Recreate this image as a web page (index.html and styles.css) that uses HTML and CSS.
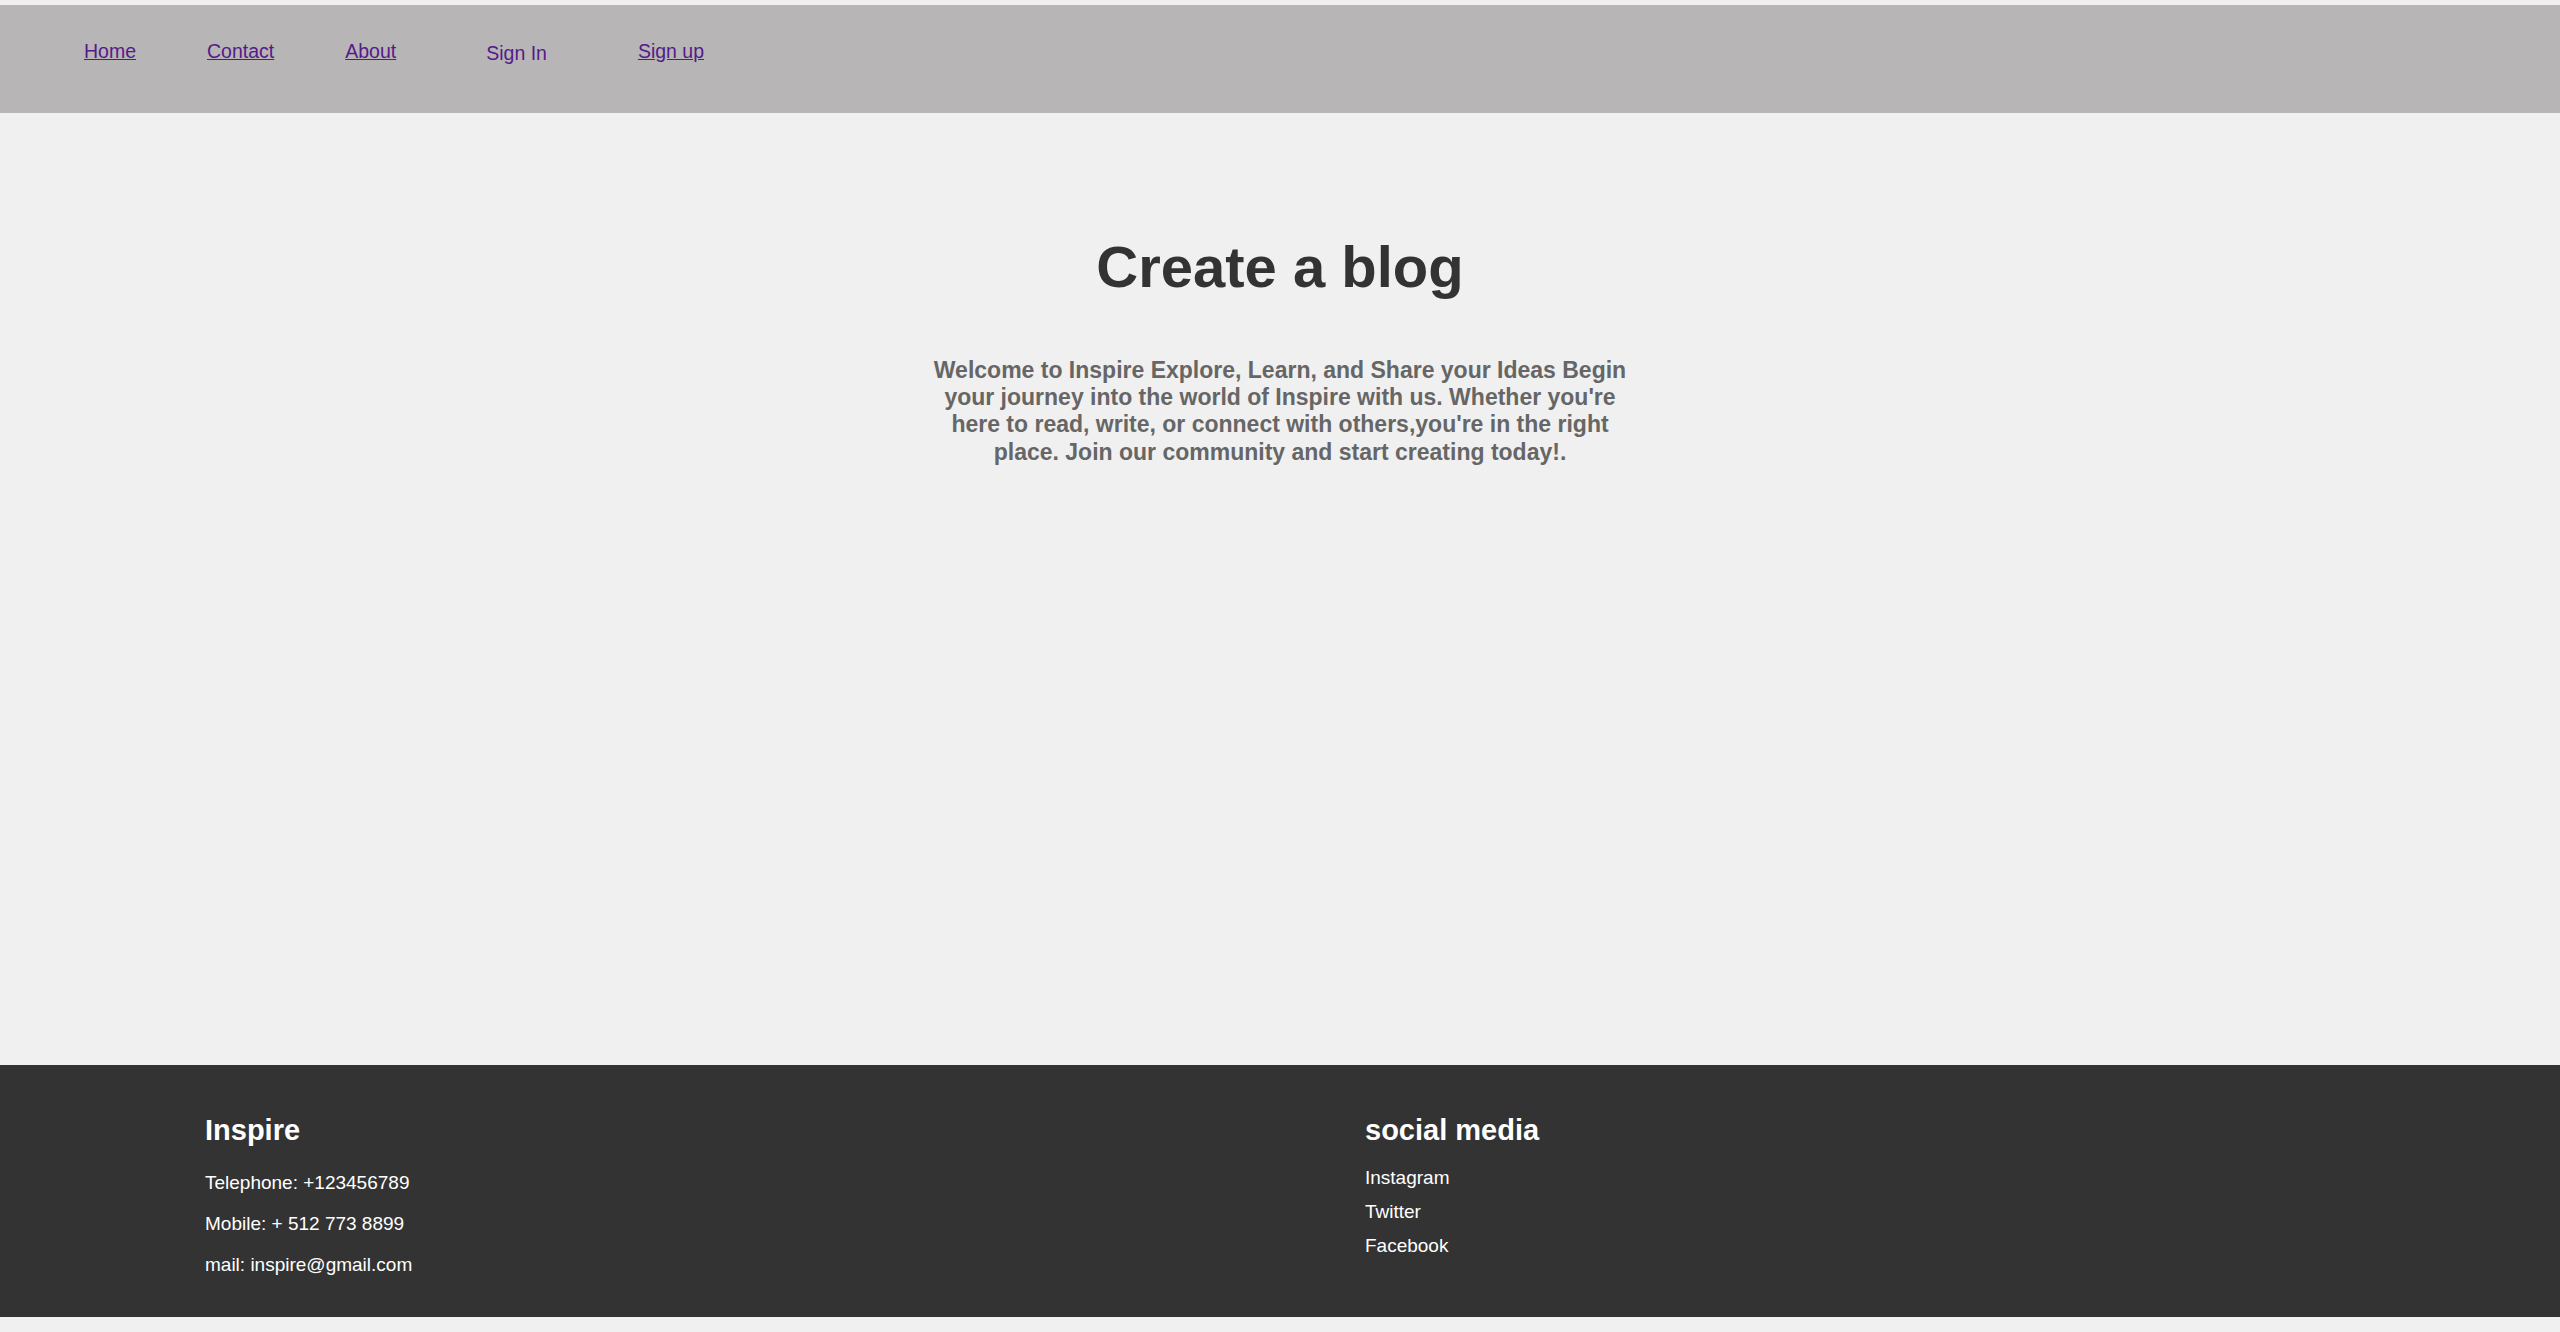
FILE: index.html
```html
<!DOCTYPE html>
<html lang="en">
<head>
<meta charset="utf-8">
<title>Inspire - Create a blog</title>
<link rel="stylesheet" href="styles.css">
</head>
<body>
<header class="topbar">
  <nav class="nav">
    <a class="nav-link" href="#home">Home</a>
    <a class="nav-link" href="#contact">Contact</a>
    <a class="nav-link" href="#about">About</a>
    <span class="nav-link nav-signin">Sign In</span>
    <a class="nav-link nav-signup" href="#signup">Sign up</a>
  </nav>
</header>
<main class="hero">
  <h1 class="hero-title">Create a blog</h1>
  <p class="hero-text">Welcome to Inspire Explore, Learn, and Share your Ideas Begin your journey into the world of Inspire with us. Whether you're here to read, write, or connect with others,you're in the right place. Join our community and start creating today!.</p>
</main>
<footer class="footer">
  <div class="footer-col footer-contact">
    <h2 class="footer-title">Inspire</h2>
    <p class="footer-line">Telephone: +123456789</p>
    <p class="footer-line">Mobile: + 512 773 8899</p>
    <p class="footer-line">mail: inspire@gmail.com</p>
  </div>
  <div class="footer-col footer-social">
    <h2 class="footer-title">social media</h2>
    <ul class="social-list">
      <li class="social-item">Instagram</li>
      <li class="social-item">Twitter</li>
      <li class="social-item">Facebook</li>
    </ul>
  </div>
</footer>
<div class="page-end"></div>
</body>
</html>
```
FILE: styles.css
```css
* { box-sizing: border-box; }

html, body {
  margin: 0;
  padding: 0;
}

body {
  background: #f0f0f0;
  font-family: "Liberation Sans", Arial, sans-serif;
  padding-top: 5px;
}

.topbar {
  background: #b7b5b5;
  height: 108px;
  padding: 35px 0 0 84px;
}

.nav {
  display: flex;
  align-items: flex-start;
}

.nav-link {
  font-size: 19.5px;
  line-height: 23px;
  color: #551a8b;
  text-decoration: underline;
  margin-right: 71px;
}

.nav-link:nth-child(3) { margin-right: 90px; }

.nav-signin {
  text-decoration: none;
  margin-top: 1.5px;
  margin-right: 91px;
}

.nav-signup { margin-right: 0; }

.hero {
  height: 952px;
  padding-top: 120px;
  display: flex;
  flex-direction: column;
  align-items: center;
}

.hero-title {
  margin: 0;
  font-size: 58px;
  line-height: 67px;
  font-weight: bold;
  color: #333333;
}

.hero-text {
  margin: 57px 0 0;
  width: 714px;
  text-align: center;
  font-size: 23px;
  line-height: 27.2px;
  font-weight: bold;
  color: #666666;
}

.footer {
  background: #333333;
  color: #ffffff;
  height: 252px;
  padding: 48.5px 0 0 205px;
  display: grid;
  grid-template-columns: 1160px 1fr;
  align-items: start;
}

.footer-title {
  margin: 0;
  font-size: 29px;
  line-height: 33px;
  font-weight: bold;
}

.footer-line {
  margin: 0;
  font-size: 19px;
  line-height: 22px;
}

.footer-title + .footer-line { margin-top: 25px; }
.footer-line + .footer-line { margin-top: 19px; }

.social-list {
  list-style: none;
  margin: 20px 0 0;
  padding: 0;
}

.social-item {
  font-size: 19px;
  line-height: 22px;
}

.social-item + .social-item { margin-top: 12px; }

.page-end { height: 15px; }
```
